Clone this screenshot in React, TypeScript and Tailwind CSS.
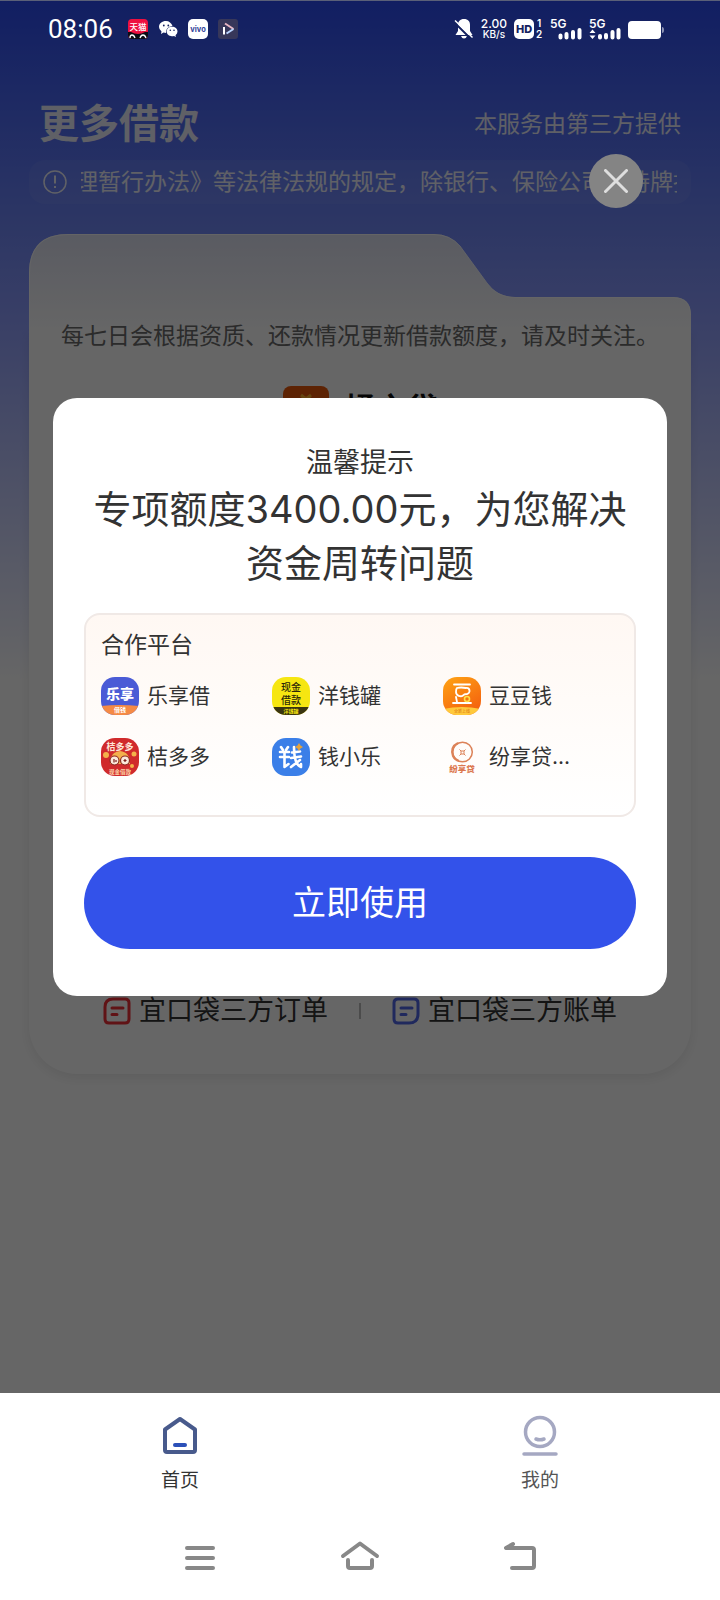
import React from 'react';

interface Partner {
  name: string;
  logo: React.ReactNode;
}

const cjk = 'font-["Noto_Sans_CJK_SC",sans-serif]';

// Partner logos, all drawn on a 38x38 grid
const LexiangLogo = () => (
  <svg viewBox="0 0 38 38" className="size-[38px] shrink-0" aria-hidden="true">
    <clipPath id="lx"><rect width="38" height="38" rx="14" /></clipPath>
    <g clipPath="url(#lx)">
      <rect width="38" height="38" fill="#4a5bd6" />
      <path d="M0 29 Q19 27 38 29 V38 H0Z" fill="#f58a45" />
      <text x="19" y="22" fontSize="14" fontWeight="900" fill="#fff" textAnchor="middle" className={cjk}>乐享</text>
      <text x="19" y="35" fontSize="6" fontWeight="700" fill="#fff" textAnchor="middle" className={cjk}>借钱</text>
    </g>
  </svg>
);

const YangqianLogo = () => (
  <svg viewBox="0 0 38 38" className="size-[38px] shrink-0" aria-hidden="true">
    <clipPath id="yq"><rect width="38" height="38" rx="14" /></clipPath>
    <g clipPath="url(#yq)">
      <rect width="38" height="38" fill="#f6e611" />
      <rect y="30" width="38" height="8" fill="#3a3410" />
      <text x="19" y="14" fontSize="10" fontWeight="500" fill="#2a2608" textAnchor="middle" className={cjk}>现金</text>
      <text x="19" y="27" fontSize="10" fontWeight="500" fill="#2a2608" textAnchor="middle" className={cjk}>借款</text>
      <text x="19" y="36" fontSize="5" fontWeight="700" fill="#f6e611" textAnchor="middle" className={cjk}>洋钱罐</text>
    </g>
  </svg>
);

const DoudouLogo = () => (
  <svg viewBox="0 0 38 38" className="size-[38px] shrink-0" aria-hidden="true">
    <defs>
      <clipPath id="dd"><rect width="38" height="38" rx="14" /></clipPath>
      <linearGradient id="ddg" x1="0" y1="0" x2="0.6" y2="1">
        <stop offset="0" stopColor="#ffa414" />
        <stop offset="1" stopColor="#f4630f" />
      </linearGradient>
    </defs>
    <g clipPath="url(#dd)">
      <rect width="38" height="38" fill="url(#ddg)" />
      <path d="M0 32 Q19 28 38 32 V38 H0Z" fill="#ffc93c" />
      <g fill="none" stroke="#fff" strokeWidth="1.800" strokeLinecap="round">
        <path d="M11 7.500h16M10 26h18M14 25l-1-5" />
        <path d="M14 11q4-1 9 0a3 3 0 0 1 1 6q-3 0-4 1.500c-2 1.500-7 .5-7-3.500q0-3 1-4z" />
      </g>
      <circle cx="24" cy="22" r="2.500" fill="none" stroke="#ffe04a" strokeWidth="1.600" />
      <text x="19" y="35.500" fontSize="4" fill="#d9720f" textAnchor="middle" className={cjk}>全新上线</text>
    </g>
  </svg>
);

const JieduoLogo = () => (
  <svg viewBox="0 0 38 38" className="size-[38px] shrink-0" aria-hidden="true">
    <clipPath id="jd"><rect width="38" height="38" rx="14" /></clipPath>
    <g clipPath="url(#jd)">
      <rect width="38" height="38" fill="#d02a2c" />
      <path d="M9 26 Q9 14 19 13 Q29 14 29 26Z" fill="#f3b04c" />
      <circle cx="5" cy="17" r="3" fill="#f4b24a" />
      <circle cx="33" cy="16" r="2.500" fill="#f4b24a" />
      <circle cx="31" cy="28" r="2" fill="#f4b24a" />
      <circle cx="13.500" cy="22.500" r="4.500" fill="#fbe9dc" stroke="#8c2a22" strokeWidth="1.200" />
      <circle cx="24" cy="22.500" r="4.500" fill="#fbe9dc" stroke="#8c2a22" strokeWidth="1.200" />
      <path d="M13 21v3.500M15 22v2M22.500 22.500h3M24 21v3" stroke="#7a211c" strokeWidth="1.200" />
      <text x="19" y="12" fontSize="9" fontWeight="700" fill="#ffe6d8" textAnchor="middle" className={cjk}>桔多多</text>
      <text x="19" y="35.500" fontSize="5.500" fontWeight="700" fill="#ffdcae" textAnchor="middle" className={cjk}>现金借款</text>
    </g>
  </svg>
);

const QianxiaoleLogo = () => (
  <svg viewBox="0 0 38 38" className="size-[38px] shrink-0" aria-hidden="true">
    <rect width="38" height="38" rx="14" fill="#3b7fe8" />
    <g fill="none" stroke="#fff" strokeWidth="2.600" strokeLinecap="round" strokeLinejoin="round">
      <path d="M9 9l2 3M16 9l-2 3M8 14h9M8 19h9M12.500 14v15l4-3" />
      <path d="M20 14.500l8-1M19 20l10-1.500M22 9c0 9 1 18 7 20v-3M28 22l-9 7" />
    </g>
    <path d="M27 5l1.500 2.500L31 9l-2.500 1.500L27 13l-1.500-2.500L23 9l2.500-1.500z" fill="#e5a23a" />
  </svg>
);

const FenxiangLogo = () => (
  <svg viewBox="0 0 38 38" className="size-[38px] shrink-0" aria-hidden="true">
    <circle cx="19.500" cy="14" r="9.800" fill="none" stroke="#dc8258" strokeWidth="1.500" />
    <path d="M15 5 Q7 9 10 18 Q12 22 16 23" fill="none" stroke="#dc8258" strokeWidth="2.200" />
    <path d="M16.500 11.500l1.500 1.500h3l1.500-1.500M16.500 17.500l1.500-1.500h3l1.500 1.500M18 13v3M21 13v3" fill="none" stroke="#dc8258" strokeWidth="1" />
    <text x="19" y="34" fontSize="8.500" fontWeight="900" fill="#dc7850" textAnchor="middle" className={cjk}>纷享贷</text>
  </svg>
);

const partners: Partner[] = [
  { name: '乐享借', logo: <LexiangLogo /> },
  { name: '洋钱罐', logo: <YangqianLogo /> },
  { name: '豆豆钱', logo: <DoudouLogo /> },
  { name: '桔多多', logo: <JieduoLogo /> },
  { name: '钱小乐', logo: <QianxiaoleLogo /> },
  { name: '纷享贷...', logo: <FenxiangLogo /> }
];

const StatusBar = () => (
  <div className="relative z-20 flex h-14 items-center justify-between border-t border-[#5a6078] pl-12 pr-14 text-white">
    <div className="flex items-center gap-[10px]">
      <span className="mr-[5px] font-[Roboto,sans-serif] text-[26px] leading-none">08:06</span>
      <svg viewBox="0 0 20 20" className="size-5" aria-hidden="true">
        <rect width="20" height="20" rx="4" fill="#ee1040" />
        <path d="M0 13h3q7 4 14 0h3v3a4 4 0 0 1-4 4H4a4 4 0 0 1-4-4z" fill="#0c0c14" />
        <path d="M2 19q0-3 2-3t3 3M12 19q1-3 3-3t3 3" fill="none" stroke="#fff" strokeWidth="1.300" />
        <text x="10" y="11" fontSize="8.500" fontWeight="500" fill="#fff" textAnchor="middle" className={cjk}>天猫</text>
      </svg>
      <svg viewBox="0 0 20 20" className="size-5" aria-hidden="true">
        <path d="M8 2C4 2 1 4.500 1 8q0 2.500 2.500 4.500L3 15l2.500-1.400Q7 14 8 14q-.5-6 6.500-7C13.500 4 11 2 8 2z" fill="#fff" />
        <path d="M14 7.800c-3 0-5.300 2-5.300 4.700s2.300 4.700 5.300 4.700q1 0 2-.3l2 1-.5-1.700q2-1.700 2-3.700c0-2.700-2.500-4.700-5.500-4.700z" fill="#fff" />
        <g fill="#15215f"><circle cx="5.800" cy="6.500" r=".9" /><circle cx="10.300" cy="6.500" r=".9" /><circle cx="12.300" cy="11.300" r=".8" /><circle cx="16" cy="11.300" r=".8" /></g>
      </svg>
      <svg viewBox="0 0 20 20" className="size-5" aria-hidden="true">
        <rect width="20" height="20" rx="5" fill="#fff" />
        <text x="10" y="12.500" fontSize="7.500" fontWeight="700" fill="#33449a" textAnchor="middle" className="font-[Inter,sans-serif]">vivo</text>
      </svg>
      <svg viewBox="0 0 20 20" className="size-5" aria-hidden="true">
        <rect width="20" height="20" rx="3" fill="#37375a" />
        <path d="M6 8v7.500" stroke="#fff" strokeWidth="2" />
        <path d="M7 4.500l8.500 5.500" stroke="#e9b7c4" strokeWidth="2" />
        <path d="M15.500 10L8.500 14.500" stroke="#b9d4ff" strokeWidth="2" />
      </svg>
    </div>
    <div className="flex items-center gap-[7px] font-[Inter,sans-serif]">
      <svg viewBox="0 0 20 20" className="size-5" aria-hidden="true">
        <path d="M10 0c4 0 6 2.500 6 6v6l2.500 4H1.500L4 12V6c0-3.500 2-6 6-6z" fill="#fff" />
        <path d="M7 17h6q-1 2.500-3 2.500T7 17z" fill="#fff" />
        <path d="M0 3l17 17" stroke="#14215f" strokeWidth="2" />
        <path d="M1 1.500l17.500 17" stroke="#fff" strokeWidth="1.500" />
      </svg>
      <div className="text-center leading-none font-medium">
        <div className="text-[12px] leading-[11px]">2.00</div>
        <div className="text-[10px] leading-[10px]">KB/s</div>
      </div>
      <svg viewBox="0 0 29 20" className="h-5 w-[29px] overflow-visible" aria-hidden="true">
        <rect width="20" height="20" rx="5" fill="#fff" />
        <text x="10" y="14" fontSize="11" fontWeight="800" fill="#14215f" textAnchor="middle">HD</text>
        <text x="25" y="8" fontSize="10" fontWeight="600" fill="#fff" textAnchor="middle">1</text>
        <text x="25" y="19" fontSize="10" fontWeight="600" fill="#fff" textAnchor="middle">2</text>
      </svg>
      <svg viewBox="0 0 32 20" className="h-5 w-8 overflow-visible" aria-hidden="true">
        <text x="0" y="9" fontSize="12" fontWeight="600" fill="#fff">5G</text>
        <path d="M10.500 16.500v2M16.500 15v3.500M23 13v5.500M29.500 11v7.500" stroke="#fff" strokeWidth="4" strokeLinecap="round" />
      </svg>
      <svg viewBox="0 0 32 20" className="h-5 w-8 overflow-visible" aria-hidden="true">
        <text x="0" y="9" fontSize="12" fontWeight="600" fill="#fff">5G</text>
        <path d="M3.500 10.500l3 3.500h-6zM3.500 20l3-3.500h-6z" fill="#fff" />
        <path d="M11 17v1.500M17 16v2.500M23.500 13v5.500M29.500 11v7.500" stroke="#fff" strokeWidth="4" strokeLinecap="round" />
      </svg>
      <svg viewBox="0 0 36 20" className="h-5 w-9" aria-hidden="true">
        <rect y="2" width="33" height="18" rx="4" fill="#fff" />
        <path d="M34 8q2 0 2 3t-2 3z" fill="#8c93b5" />
      </svg>
    </div>
  </div>
);

const DocIcon = ({ color, flip }: { color: string; flip?: boolean }) => (
  <svg viewBox="0 0 28 28" className="size-7" fill="none" stroke={color} strokeWidth="3" strokeLinecap="round" aria-hidden="true">
    <path d={flip ? 'M6 2h16q4 0 4 4v11q0 9-9 9H6q-4 0-4-4V6q0-4 4-4z' : 'M10 2h12q4 0 4 4v16q0 4-4 4H6q-4 0-4-4V10q0-8 8-8z'} />
    <path d="M9 11h11M9 17.500h5" />
  </svg>
);

const App: React.FC = () => {
  return (
    <div className='flex min-h-screen flex-col bg-white font-[Inter,"Noto_Sans_CJK_SC",sans-serif] text-[#333]'>
      <div className="relative flex flex-1 flex-col bg-[linear-gradient(180deg,#2c4df5_0px,#6c85fa_210px,#8c9cff_310px,#ffffff_680px)]">
        <StatusBar />

        {/* Page header */}
        <header className="mt-10 flex items-center justify-between px-[39px] text-white/90">
          <h1 className="text-[40px] leading-[56px] font-bold">更多借款</h1>
          <span className="text-[23px]">本服务由第三方提供</span>
        </header>

        <div className="mx-[29px] mt-2 flex h-11 items-center rounded-2xl bg-white/5 px-[14px] text-white/90">
          <svg viewBox="0 0 24 24" className="size-6 shrink-0" fill="none" stroke="currentColor" strokeWidth="1.500" aria-hidden="true">
            <circle cx="12" cy="12" r="11" />
            <path d="M12 5.500v8M12 16v2" strokeWidth="2" />
          </svg>
          <div className="ml-[14px] flex-1 overflow-hidden">
            <p className="-ml-1.5 text-[23px] leading-8 whitespace-nowrap">理暂行办法》等法律法规的规定，除银行、保险公司等持牌担保</p>
          </div>
        </div>

        {/* Quota card */}
        <main className="relative mx-[29px] mt-[30px] flex min-h-[840px] flex-col rounded-b-[48px] pt-[86px] pb-12">
          <div className="absolute inset-x-0 top-24 bottom-0 rounded-b-[48px] bg-white shadow-[0_4px_12px_rgba(0,0,0,0.08)]" />
          <svg viewBox="0 0 662 97" className="absolute inset-x-0 top-0 w-full" aria-hidden="true">
            <defs>
              <linearGradient id="cap" x1="0" y1="0" x2="0" y2="1">
                <stop offset="0" stopColor="#e0e3f4" />
                <stop offset="1" stopColor="#ffffff" />
              </linearGradient>
            </defs>
            <path d="M0 97V39Q0 0 39 0H405Q421 0 431 12L458 49Q468 63 486 63H644Q662 63 662 81V97Z" fill="url(#cap)" />
            <path d="M.5 97V39Q.5 .5 39 .5H405Q421 .5 431 12L458 49Q468 63.500 486 63.500H644Q661.500 63.500 661.500 81" fill="none" stroke="#fff" strokeOpacity=".8" />
          </svg>
          <p className="relative text-center text-[23px] leading-8 text-[#6b6b6b]">每七日会根据资质、还款情况更新借款额度，请及时关注。</p>
          <div className="relative mt-[34px] flex items-center justify-center gap-4">
            <svg viewBox="0 0 46 46" className="size-[46px]" aria-hidden="true">
              <rect width="46" height="46" rx="8" fill="#e8590c" />
              <path d="M18 9l5 4 5-4M16 14l7-2 7 2M23 12v22" fill="none" stroke="#ffb02c" strokeWidth="3" />
            </svg>
            <span className="text-[31px] font-bold text-[#111]">橘之贷</span>
          </div>
          <div className="relative mt-auto flex items-center justify-center text-[27px] leading-[30px] text-[#333]">
            <a href="#orders" className="flex items-center gap-2"><DocIcon color="#f03038" />宜口袋三方订单</a>
            <span className="mx-[31px] h-4 w-0.5 bg-[#bbb]" />
            <a href="#bills" className="flex items-center gap-2"><DocIcon color="#5068e8" flip />宜口袋三方账单</a>
          </div>
        </main>

        {/* Overlay with the dialog */}
        <div className="absolute inset-0 z-10 flex items-center bg-black/60 px-[53px]">
          <button aria-label="关闭" className="absolute top-[154px] right-[77px] flex size-[54px] items-center justify-center rounded-full bg-[#848484]">
            <svg viewBox="0 0 24 24" className="size-6" stroke="#dedede" strokeWidth="3" strokeLinecap="round" aria-hidden="true">
              <path d="M1.500 1.500l21 21M22.500 1.500l-21 21" />
            </svg>
          </button>
          <section role="dialog" aria-labelledby="tip" className="w-full rounded-3xl bg-white px-[31px] pt-[46px] pb-[47px] text-center">
            <h2 id="tip" className="text-[27px] leading-[38px]">温馨提示</h2>
            <p className="text-[38px] leading-[54px]">专项额度3400.00元，为您解决资金周转问题</p>
            <div className="mt-[23px] rounded-2xl border-2 border-[#f0e9e6] bg-linear-to-b from-[#fff8f3] to-white pt-[14px] pr-5 pb-[39px] pl-[15px] text-left">
              <h3 className="text-[23px] leading-8">合作平台</h3>
              <ul className="mt-4 grid grid-cols-3 gap-y-[23px]">
                {partners.map((p) => (
                  <li key={p.name} className="flex h-[38px] items-center gap-2 text-[21px]">
                    {p.logo}
                    <span>{p.name}</span>
                  </li>
                ))}
              </ul>
            </div>
            <button className="mt-10 h-[92px] w-full rounded-full bg-[#3352ea] text-[34px] text-white">立即使用</button>
          </section>
        </div>
      </div>

      {/* Tab bar */}
      <nav className="flex h-[118px] justify-around pt-5 text-[19px] leading-8">
        <a href="#home" className="flex flex-1 flex-col items-center gap-2">
          <svg viewBox="0 0 44 44" className="size-11" fill="none" strokeWidth="4" strokeLinecap="round" strokeLinejoin="round" aria-hidden="true">
            <path d="M22 6L37 16.500V37q0 2-2 2H9q-2 0-2-2V16.500z" stroke="#485a8c" />
            <path d="M17 32h10" stroke="#2b50b8" />
          </svg>
          首页
        </a>
        <a href="#me" className="flex flex-1 flex-col items-center gap-2 text-[#555]">
          <svg viewBox="0 0 44 44" className="size-11" fill="none" stroke="#a5a8c2" strokeWidth="3.500" strokeLinecap="round" aria-hidden="true">
            <circle cx="22" cy="19" r="14.500" />
            <path d="M18 26q4 1.500 8 0M6 41h32" />
          </svg>
          我的
        </a>
      </nav>

      {/* System navigation */}
      <div className="flex h-[89px] items-start justify-center gap-[120px] pt-6">
        <button aria-label="菜单">
          <svg viewBox="0 0 40 40" className="size-10" stroke="#888" strokeWidth="4" strokeLinecap="round" aria-hidden="true">
            <path d="M7 13h26M7 23h26M7 33h26" />
          </svg>
        </button>
        <button aria-label="主屏幕">
          <svg viewBox="0 0 40 40" className="size-10" fill="none" stroke="#888" strokeWidth="4" strokeLinecap="round" strokeLinejoin="round" aria-hidden="true">
            <path d="M3 21L20 8.500 37 21M8 25v6q0 2 2 2h20q2 0 2-2v-6" />
          </svg>
        </button>
        <button aria-label="返回">
          <svg viewBox="0 0 40 40" className="size-10" fill="none" stroke="#888" strokeWidth="4" strokeLinecap="round" strokeLinejoin="round" aria-hidden="true">
            <path d="M13 9L6 13h26q2 0 2 2v16q0 2-2 2H12" />
          </svg>
        </button>
      </div>
    </div>
  );
};

export default App;
